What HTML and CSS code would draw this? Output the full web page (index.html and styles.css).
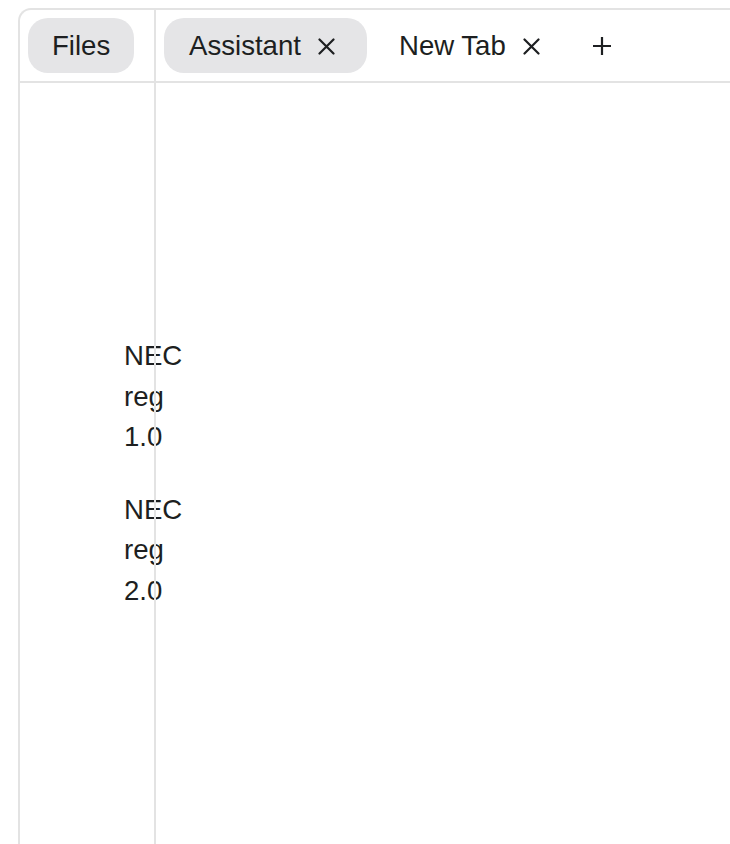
FILE: index.html
```html
<!DOCTYPE html>
<html lang="en">
<head>
<meta charset="utf-8">
<title>Tabs</title>
<link rel="stylesheet" href="styles.css">
</head>
<body>
<div class="app">
  <aside class="sidebar">
    <div class="sidebar-head">
      <button class="pill active">Files</button>
    </div>
    <div class="sidebar-body">
      <div class="entry">NEC reg 1.0</div>
      <div class="entry">NEC reg 2.0</div>
    </div>
  </aside>
  <main class="main">
    <nav class="tabbar">
      <div class="pill active tab">
        <span>Assistant</span>
        <svg class="close" viewBox="0 0 17 17" width="17" height="17"><path d="M1.5 1.5 L15.5 15.5 M15.5 1.5 L1.5 15.5" stroke="#1d1f21" stroke-width="2.2" stroke-linecap="round" fill="none"/></svg>
      </div>
      <div class="pill tab">
        <span>New Tab</span>
        <svg class="close" viewBox="0 0 17 17" width="17" height="17"><path d="M1.5 1.5 L15.5 15.5 M15.5 1.5 L1.5 15.5" stroke="#1d1f21" stroke-width="2.2" stroke-linecap="round" fill="none"/></svg>
      </div>
      <button class="add" aria-label="New tab">
        <svg viewBox="0 0 20 20" width="20" height="20"><path d="M10 1 V19 M1 10 H19" stroke="#1d1f21" stroke-width="2.2" fill="none"/></svg>
      </button>
    </nav>
    <section class="main-body"></section>
  </main>
</div>
</body>
</html>
```

FILE: styles.css
```css
html {
  background: #ffffff;
}

html, body {
  margin: 0;
  padding: 0;
}

body {
  font-family: "Liberation Sans", Arial, Helvetica, sans-serif;
  font-size: 27.6px;
  color: #1d1f21;
  overflow: hidden;
}

.app {
  display: flex;
  margin: 8px 0 0 18px;
  width: calc(100vw - 18px);
  height: calc(100vh - 8px);
  box-sizing: border-box;
  border-top: 2px solid #e3e3e3;
  border-left: 2px solid #e3e3e3;
  border-top-left-radius: 13px;
}

.sidebar {
  width: 136px;
  box-sizing: border-box;
  flex: none;
  border-right: 2px solid #e3e3e3;
  display: flex;
  flex-direction: column;
}

.sidebar-head {
  height: 73px;
  box-sizing: border-box;
  padding: 8px;
  border-bottom: 2px solid #e3e3e3;
  display: flex;
  align-items: center;
}

.sidebar-body {
  position: relative;
  z-index: -1;
  padding: 253px 0 0 104px;
  display: flex;
  flex-direction: column;
  gap: 32px;
}

.entry {
  width: 60px;
  line-height: 40.5px;
}

.main {
  flex: 1;
  min-width: 0;
  display: flex;
  flex-direction: column;
}

.tabbar {
  height: 73px;
  box-sizing: border-box;
  padding: 8px;
  border-bottom: 2px solid #e3e3e3;
  display: flex;
  align-items: center;
  gap: 7px;
}

.pill {
  font: inherit;
  color: inherit;
  height: 55px;
  box-sizing: border-box;
  border: none;
  border-radius: 20px;
  background: transparent;
  padding: 0 24px;
  display: flex;
  align-items: center;
  white-space: nowrap;
}

.pill.active {
  background: #e5e5e7;
}

.tab {
  padding: 0 32px 0 25px;
}

.close {
  margin-left: 17px;
  margin-top: 2px;
  flex: none;
}

.add {
  border: none;
  background: transparent;
  width: 46px;
  height: 55px;
  padding: 0;
  display: flex;
  align-items: center;
  justify-content: center;
}

.main-body {
  flex: 1;
}
```
